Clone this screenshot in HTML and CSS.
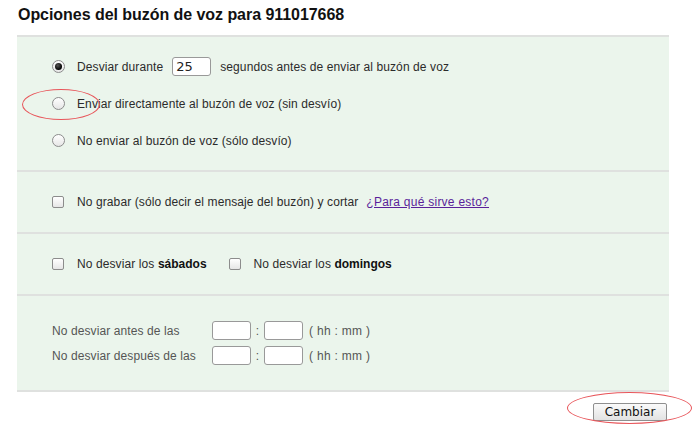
FILE: index.html
```html
<!DOCTYPE html>
<html lang="es">
<head>
	<meta charset="UTF-8">
	<title>Opciones del buzón de voz</title>
	<link rel="stylesheet" href="styles.css">
</head>
<body>
	<div id="page">
		<h1>Opciones del buzón de voz para 911017668</h1>
		<form class="panel">
			<div class="section first">
				<label class="row">
					<input type="radio" name="modo" checked>
					<span>Desviar durante</span>
					<input type="text" class="secs" value="25">
					<span>segundos antes de enviar al buzón de voz</span>
				</label>
				<label class="row">
					<input type="radio" name="modo">
					<span>Enviar directamente al buzón de voz (sin desvío)</span>
				</label>
				<label class="row">
					<input type="radio" name="modo">
					<span>No enviar al buzón de voz (sólo desvío)</span>
				</label>
			</div>
			<div class="section">
				<div class="row">
					<input type="checkbox">
					<span>No grabar (sólo decir el mensaje del buzón) y cortar</span>
					<a href="#" class="help">¿Para qué sirve esto?</a>
				</div>
			</div>
			<div class="section">
				<div class="row">
					<input type="checkbox">
					<span>No desviar los <b>sábados</b></span>
					<input type="checkbox" class="second">
					<span>No desviar los <b>domingos</b></span>
				</div>
			</div>
			<div class="section last">
				<div class="times">
					<span>No desviar antes de las</span>
					<input type="text" class="hm">
					<span class="colon">:</span>
					<input type="text" class="hm">
					<span>( hh : mm )</span>

					<span>No desviar después de las</span>
					<input type="text" class="hm">
					<span class="colon">:</span>
					<input type="text" class="hm">
					<span>( hh : mm )</span>
				</div>
			</div>
			<div class="actions">
				<button type="button">Cambiar</button>
			</div>
		</form>
		<span class="mark mark-radio"></span>
		<span class="mark mark-btn"></span>
	</div>
</body>
</html>
```

FILE: styles.css
```css
body,h1,form{margin: 0;padding: 0;}
body{background: #fff;font-family: "Liberation Sans", Arial, sans-serif;font-size: 12px;color: #2b2b2b;}
#page{position: relative;width: 692px;height: 426px;overflow: hidden;}
h1{font-size: 16px;line-height: 20px;font-weight: bold;color: #111;padding: 5px 0 0 18px;height: 30px;letter-spacing: -0.05px;}
.panel{width: 652px;margin-left: 17px;border-top: 2px solid #dfe1df;letter-spacing: 0.1px;}
.section{background: #ebf5ec;border-bottom: 2px solid #dfe1df;padding: 11px 0 12px 35px;}
.section.first{padding: 11px 0 11px 35px;}
.section.last{padding: 22px 0 22px 35px;color: #555;}
.row{display: flex;align-items: center;height: 37px;}
.row input[type=radio],.row input[type=checkbox]{appearance: none;-webkit-appearance: none;margin: 0 12px 0 0;flex: none;background: linear-gradient(#fff, #e6e6e6);border: 1px solid #8c8c8c;}
.row input[type=radio]{width: 13px;height: 13px;border-radius: 50%;position: relative;}
.row input[type=radio]:checked::after{content: "";position: absolute;left: 2px;top: 2px;width: 7px;height: 7px;border-radius: 50%;background: radial-gradient(circle at 40% 35%, #555, #000 70%);}
.row input[type=checkbox]{width: 12px;height: 12px;border-radius: 2px;margin-right: 13px;}
.row input.second{margin-left: 22px;}
.row b{color: #111;letter-spacing: 0;}
.secs{width: 39px;height: 19px;box-sizing: border-box;margin: 0 9px 0 9px;padding: 0 3px;border: 1px solid #999;border-radius: 3px;font-family: "DejaVu Sans", sans-serif;font-size: 13px;color: #222;background: #fff;letter-spacing: 0;}
.help{margin-left: 8px;color: #5a1f9a;letter-spacing: 0.25px;}
.times{display: grid;grid-template-columns: 160px 39px 13px 39px auto;grid-auto-rows: 25px;align-items: center;justify-content: start;}
.hm{width: 39px;height: 19px;box-sizing: border-box;margin: 0;border: 1px solid #999;border-radius: 3px;background: #fff;}
.colon{text-align: center;}
.times span:nth-child(5n){padding-left: 6px;letter-spacing: 0.3px;}
.actions{display: flex;justify-content: flex-end;padding: 11px 2px 0 0;}
button{font-family: "DejaVu Sans", sans-serif;font-size: 12px;color: #111;width: 74px;height: 18px;padding: 0;border: 1px solid #8f8f8f;border-radius: 2px;background: linear-gradient(#fafafa, #e2e2e2);}
.mark{position: absolute;border: 1.5px solid #e8555a;border-radius: 50%;}
.mark-radio{left: 22px;top: 89px;width: 76px;height: 29px;}
.mark-btn{left: 567px;top: 392px;width: 123px;height: 30px;}
```
